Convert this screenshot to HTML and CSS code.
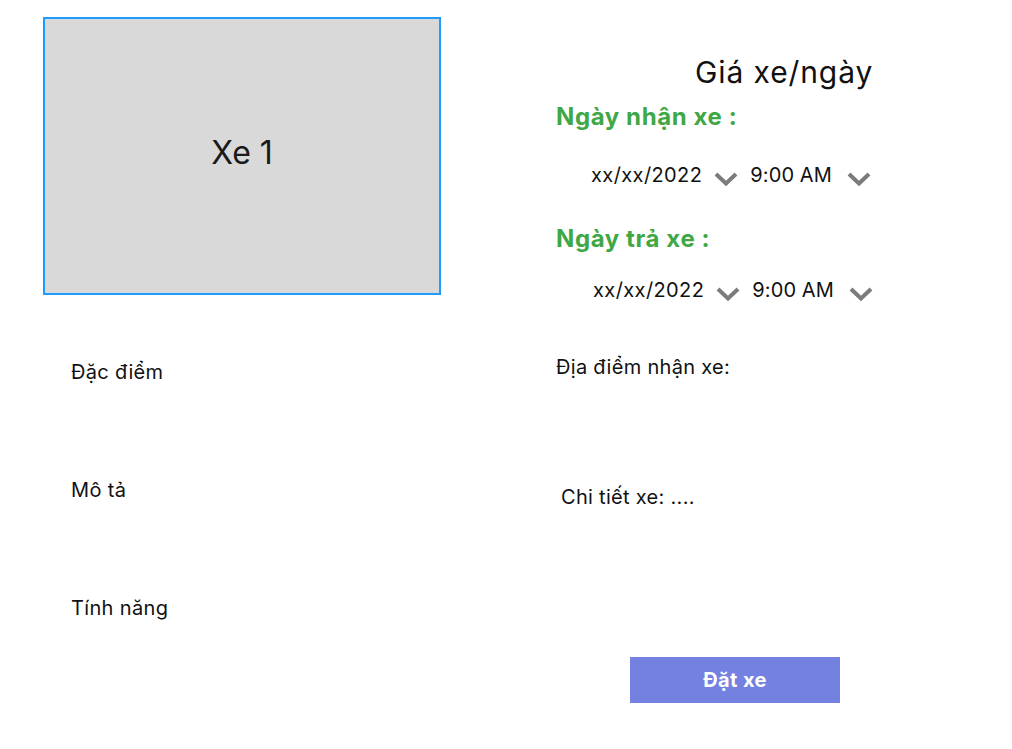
FILE: index.html
```html
<!DOCTYPE html>
<html lang="vi">
<head>
<meta charset="utf-8">
<title>Xe 1</title>
<link rel="stylesheet" href="styles.css">
</head>
<body>
<div class="page">
  <div class="left">
    <div class="photo">Xe 1</div>
    <div class="info">
      <div class="info-item">Đặc điểm</div>
      <div class="info-item">Mô tả</div>
      <div class="info-item">Tính năng</div>
    </div>
  </div>
  <div class="right">
    <div class="price">Giá xe/ngày</div>
    <div class="label">Ngày nhận xe :</div>
    <div class="picker">
      <span class="date">xx/xx/2022</span>
      <svg class="chev" viewBox="0 0 24 16" width="24" height="16"><polyline points="2,3 12,12.5 22,3" fill="none" stroke="#7b7b7b" stroke-width="4"/></svg>
      <span class="time">9:00 AM</span>
      <svg class="chev chev-last" viewBox="0 0 24 16" width="24" height="16"><polyline points="2,3 12,12.5 22,3" fill="none" stroke="#7b7b7b" stroke-width="4"/></svg>
    </div>
    <div class="label label-return">Ngày trả xe :</div>
    <div class="picker picker-return">
      <span class="date">xx/xx/2022</span>
      <svg class="chev" viewBox="0 0 24 16" width="24" height="16"><polyline points="2,3 12,12.5 22,3" fill="none" stroke="#7b7b7b" stroke-width="4"/></svg>
      <span class="time">9:00 AM</span>
      <svg class="chev chev-last" viewBox="0 0 24 16" width="24" height="16"><polyline points="2,3 12,12.5 22,3" fill="none" stroke="#7b7b7b" stroke-width="4"/></svg>
    </div>
    <div class="place">Địa điểm nhận xe:</div>
    <div class="details">Chi tiết xe: ....</div>
    <button class="book">Đặt xe</button>
  </div>
</div>
</body>
</html>
```

FILE: styles.css
```css
html, body {
  margin: 0;
  padding: 0;
  background: #ffffff;
}

body {
  font-family: Inter, "Noto Sans", sans-serif;
  color: #111111;
}

.page {
  display: flex;
  padding-top: 17px;
}

.left {
  margin-left: 43px;
  width: 398px;
  display: flex;
  flex-direction: column;
}

.photo {
  box-sizing: border-box;
  width: 398px;
  height: 278px;
  background: #d9d9d9;
  border: 2px solid #1e9bff;
  display: flex;
  align-items: center;
  justify-content: center;
  font-size: 32px;
  color: #1a1a1a;
  padding-bottom: 8px;
}

.info {
  display: flex;
  flex-direction: column;
  gap: 94px;
  margin-top: 65px;
  padding-left: 28px;
}

.info-item {
  font-size: 20px;
  line-height: 24px;
  letter-spacing: 0.35px;
}

.right {
  margin-left: 115px;
  display: flex;
  flex-direction: column;
  align-items: flex-start;
}

.price {
  margin-top: 37px;
  margin-left: 139px;
  font-size: 30px;
  line-height: 36px;
  letter-spacing: 0.9px;
  color: #111111;
}

.label {
  margin-top: 12px;
  font-size: 24px;
  line-height: 29px;
  font-weight: 700;
  letter-spacing: 0.6px;
  color: #3fa845;
}

.label-return {
  margin-top: 37px;
}

.picker {
  display: flex;
  align-items: flex-start;
  margin-top: 32px;
  padding-left: 35px;
  font-size: 20px;
  line-height: 24px;
  letter-spacing: 0.4px;
}

.picker-return {
  margin-top: 25px;
  padding-left: 37px;
}

.time {
  letter-spacing: 0.1px;
}

.chev {
  margin-top: 8px;
  margin-left: 12px;
  margin-right: 12px;
  flex: none;
}

.chev-last {
  margin-left: 15px;
  margin-right: 0;
}

.place {
  margin-top: 53px;
  font-size: 20px;
  line-height: 24px;
  letter-spacing: 0.3px;
}

.details {
  margin-top: 106px;
  padding-left: 5px;
  font-size: 20px;
  line-height: 24px;
  letter-spacing: 0.3px;
}

.book {
  margin-top: 148px;
  margin-left: 74px;
  width: 210px;
  height: 46px;
  border: none;
  background: #7581e1;
  color: #ffffff;
  font-family: Inter, "Noto Sans", sans-serif;
  font-size: 20px;
  font-weight: 700;
  letter-spacing: 0.4px;
  padding: 0;
}
```
